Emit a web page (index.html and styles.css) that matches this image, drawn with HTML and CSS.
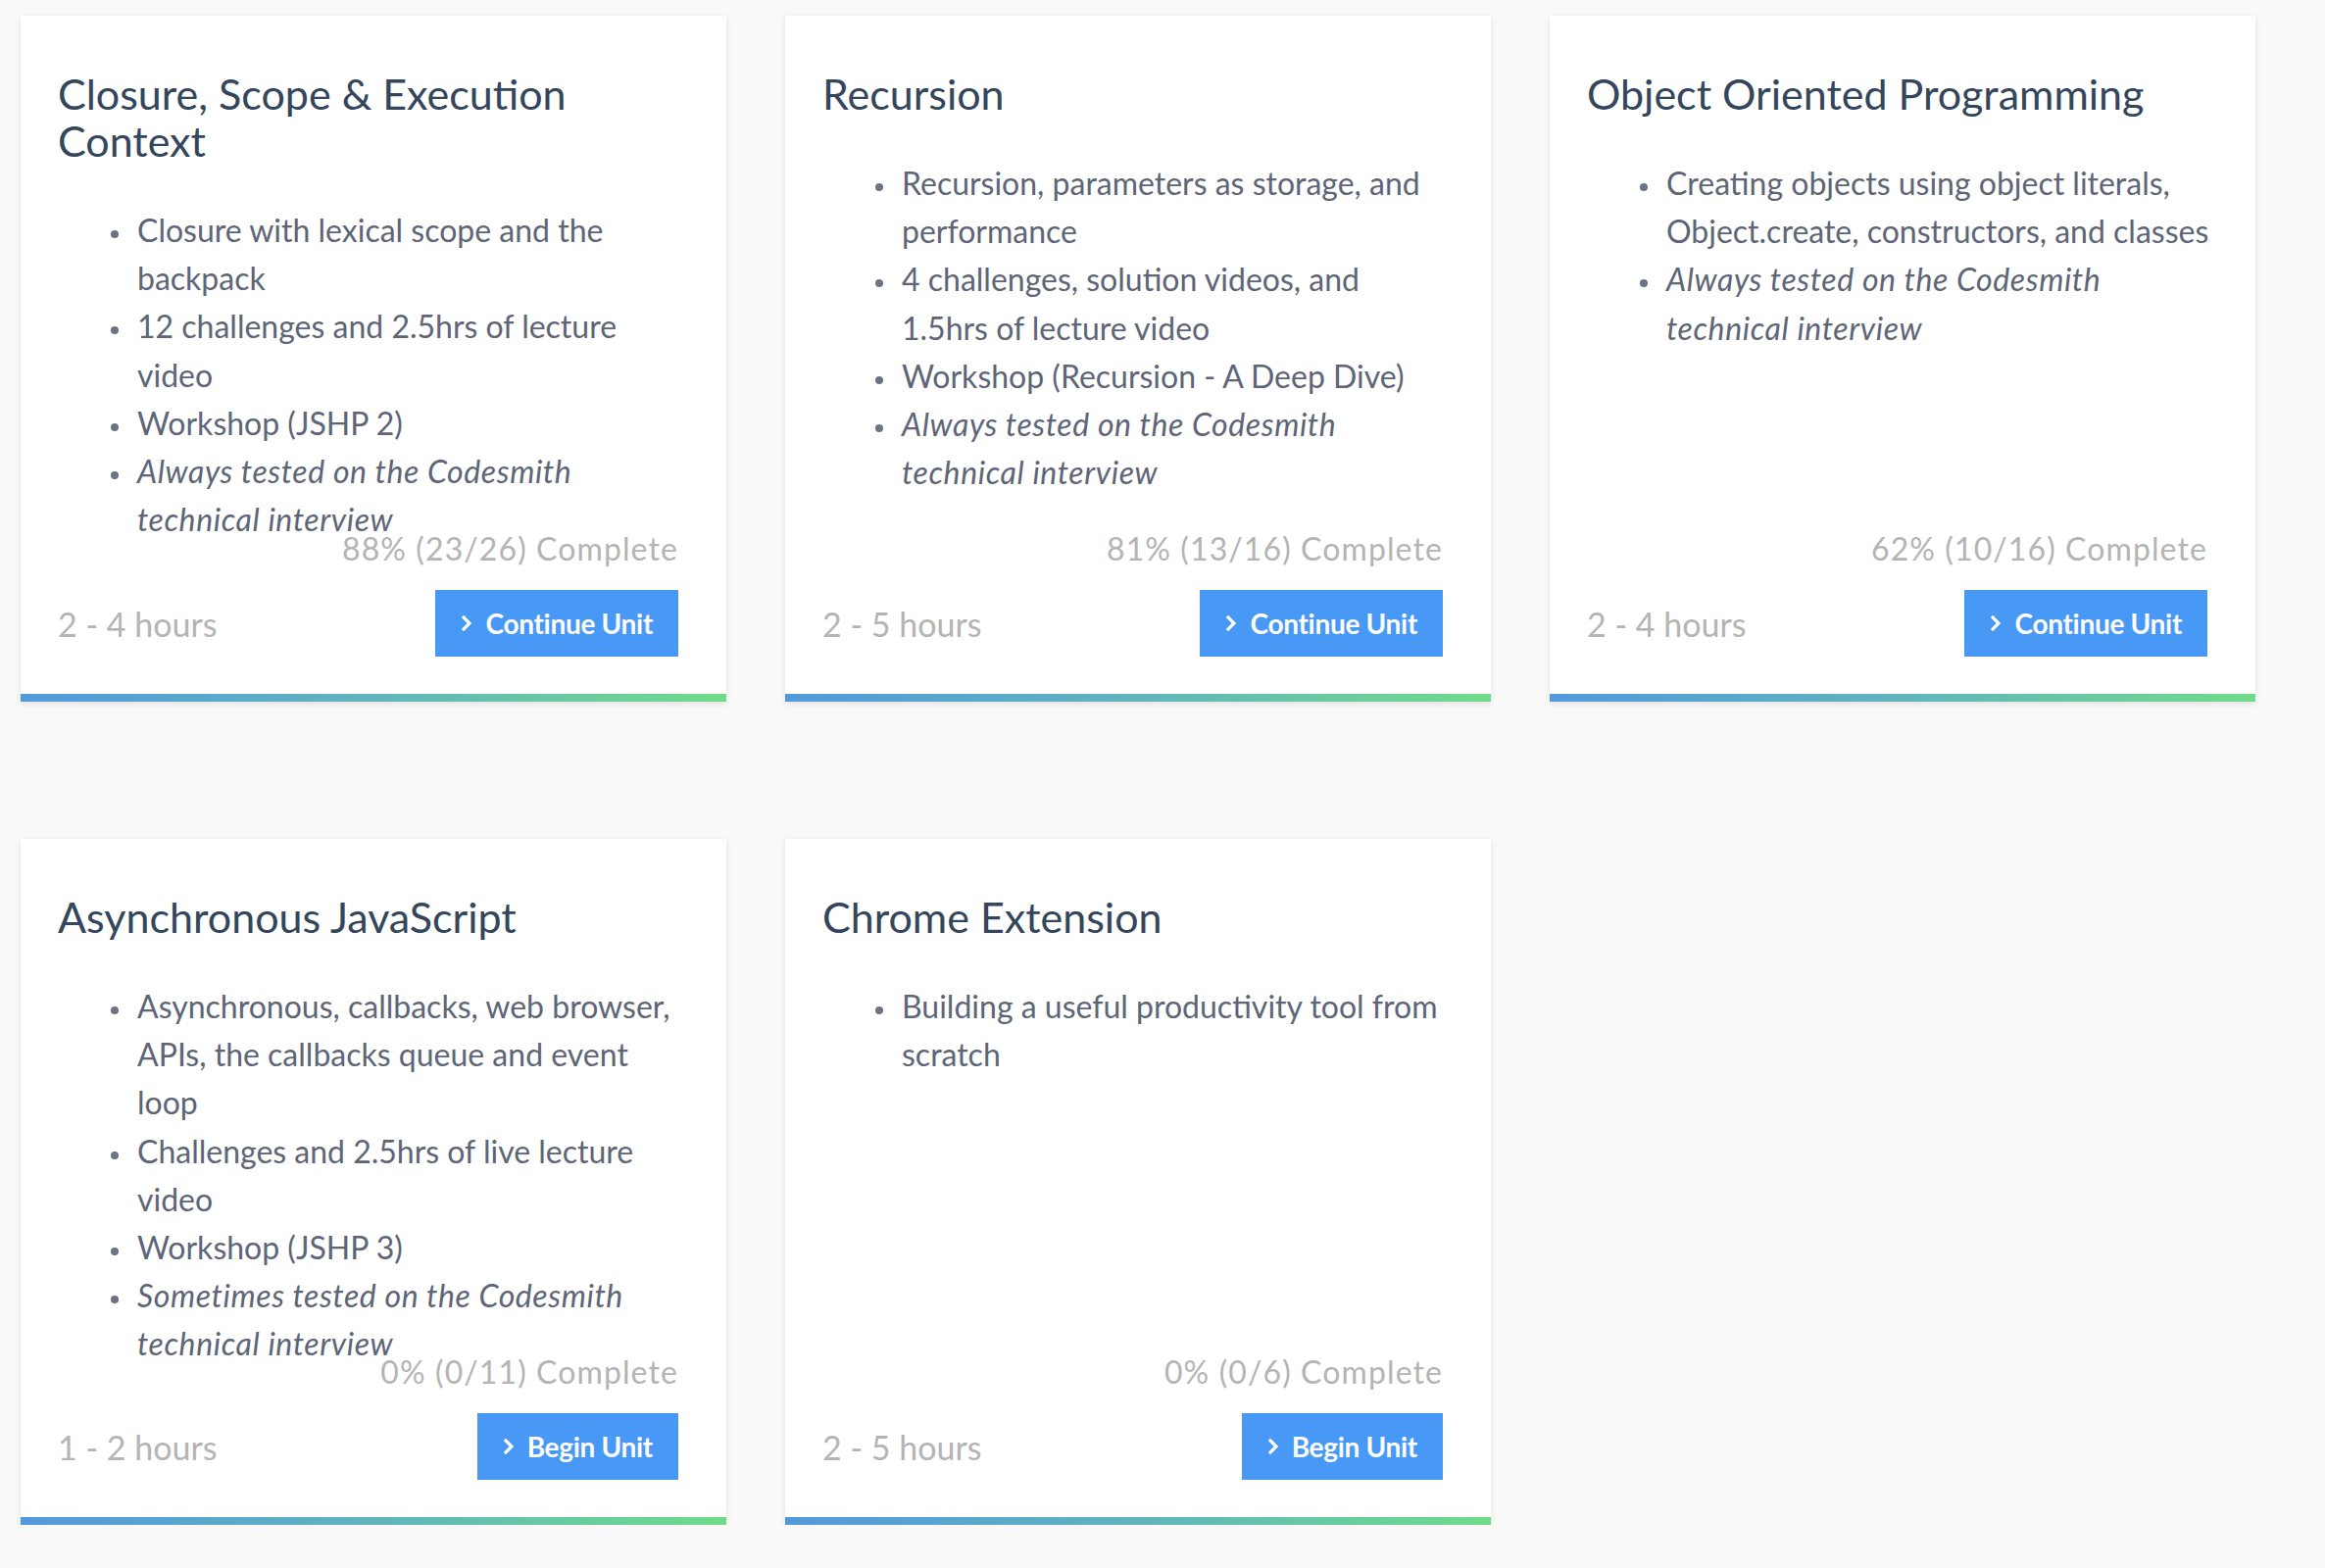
FILE: index.html
```html
<!DOCTYPE html>
<html lang="en">
<head>
<meta charset="utf-8">
<title>Units</title>
<link rel="stylesheet" href="styles.css">
</head>
<body>
<div class="grid">
  <div class="card">
    <div class="card-body">
      <div class="desc">
        <h2 class="title">Closure, Scope &amp; Execution Context</h2>
        <ul class="topics">
          <li>Closure with lexical scope and the backpack</li>
          <li>12 challenges and 2.5hrs of lecture video</li>
          <li>Workshop (JSHP 2)</li>
          <li class="em">Always tested on the Codesmith technical interview</li>
        </ul>
      </div>
      <div class="progress">88% (23/26) Complete</div>
      <div class="footer">
        <span class="hours">2 - 4 hours</span>
        <a class="btn" href="#"><svg class="chev" width="10" height="16" viewBox="0 0 10 16"><polyline points="2,2 8,8 2,14" fill="none" stroke="#fff" stroke-width="3.2" stroke-linecap="square" stroke-linejoin="miter"/></svg>Continue Unit</a>
      </div>
    </div>
    <div class="bar"></div>
  </div>

  <div class="card">
    <div class="card-body">
      <div class="desc">
        <h2 class="title">Recursion</h2>
        <ul class="topics">
          <li>Recursion, parameters as storage, and performance</li>
          <li>4 challenges, solution videos, and 1.5hrs of lecture video</li>
          <li>Workshop (Recursion - A Deep Dive)</li>
          <li class="em">Always tested on the Codesmith technical interview</li>
        </ul>
      </div>
      <div class="progress">81% (13/16) Complete</div>
      <div class="footer">
        <span class="hours">2 - 5 hours</span>
        <a class="btn" href="#"><svg class="chev" width="10" height="16" viewBox="0 0 10 16"><polyline points="2,2 8,8 2,14" fill="none" stroke="#fff" stroke-width="3.2" stroke-linecap="square" stroke-linejoin="miter"/></svg>Continue Unit</a>
      </div>
    </div>
    <div class="bar"></div>
  </div>

  <div class="card">
    <div class="card-body">
      <div class="desc">
        <h2 class="title">Object Oriented Programming</h2>
        <ul class="topics">
          <li>Creating objects using object literals, Object.create, constructors, and classes</li>
          <li class="em">Always tested on the Codesmith technical interview</li>
        </ul>
      </div>
      <div class="progress">62% (10/16) Complete</div>
      <div class="footer">
        <span class="hours">2 - 4 hours</span>
        <a class="btn" href="#"><svg class="chev" width="10" height="16" viewBox="0 0 10 16"><polyline points="2,2 8,8 2,14" fill="none" stroke="#fff" stroke-width="3.2" stroke-linecap="square" stroke-linejoin="miter"/></svg>Continue Unit</a>
      </div>
    </div>
    <div class="bar"></div>
  </div>

  <div class="card">
    <div class="card-body">
      <div class="desc">
        <h2 class="title">Asynchronous JavaScript</h2>
        <ul class="topics">
          <li>Asynchronous, callbacks, web browser, APIs, the callbacks queue and event loop</li>
          <li>Challenges and 2.5hrs of live lecture video</li>
          <li>Workshop (JSHP 3)</li>
          <li class="em">Sometimes tested on the Codesmith technical interview</li>
        </ul>
      </div>
      <div class="progress">0% (0/11) Complete</div>
      <div class="footer">
        <span class="hours">1 - 2 hours</span>
        <a class="btn" href="#"><svg class="chev" width="10" height="16" viewBox="0 0 10 16"><polyline points="2,2 8,8 2,14" fill="none" stroke="#fff" stroke-width="3.2" stroke-linecap="square" stroke-linejoin="miter"/></svg>Begin Unit</a>
      </div>
    </div>
    <div class="bar"></div>
  </div>

  <div class="card">
    <div class="card-body">
      <div class="desc">
        <h2 class="title">Chrome Extension</h2>
        <ul class="topics">
          <li>Building a useful productivity tool from scratch</li>
        </ul>
      </div>
      <div class="progress">0% (0/6) Complete</div>
      <div class="footer">
        <span class="hours">2 - 5 hours</span>
        <a class="btn" href="#"><svg class="chev" width="10" height="16" viewBox="0 0 10 16"><polyline points="2,2 8,8 2,14" fill="none" stroke="#fff" stroke-width="3.2" stroke-linecap="square" stroke-linejoin="miter"/></svg>Begin Unit</a>
      </div>
    </div>
    <div class="bar"></div>
  </div>
</div>
</body>
</html>
```

FILE: styles.css
```css
* { box-sizing: border-box; }

html, body {
  margin: 0;
  background: #f9f9f9;
}

body {
  padding: 16px 0 0 21px;
  font-family: Lato, "Open Sans", sans-serif;
  -webkit-font-smoothing: antialiased;
}

.grid {
  display: grid;
  grid-template-columns: repeat(3, 720px);
  column-gap: 60px;
  row-gap: 140px;
}

.card {
  height: 700px;
  background: #ffffff;
  display: flex;
  flex-direction: column;
  box-shadow: 0 2px 6px rgba(0, 0, 0, 0.10);
}

.card-body {
  flex: 1;
  display: flex;
  flex-direction: column;
  padding: 56px 38px 38px 38px;
}

.desc {
  height: 470px;
}

.title {
  margin: 0;
  font-size: 43px;
  line-height: 48px;
  font-weight: 400;
  color: #33465b;
}

.topics {
  margin: 42px 0 0 0;
  padding: 0 0 0 81px;
  list-style: none;
  font-size: 32px;
  line-height: 49.2px;
  color: #5d6576;
}

.topics li::before {
  content: "";
  display: inline-block;
  width: 8px;
  height: 8px;
  border-radius: 50%;
  background: #6b7384;
  vertical-align: middle;
  margin-left: -27px;
  margin-right: 19px;
}

.topics .em {
  font-style: italic;
  letter-spacing: 0.6px;
}

.progress {
  font-size: 32px;
  line-height: 36px;
  letter-spacing: 1.1px;
  text-align: right;
  color: #b4b4b4;
  padding-right: 11px;
  margin-bottom: 24px;
}

.footer {
  height: 68px;
  display: flex;
  align-items: center;
  justify-content: space-between;
  padding-right: 11px;
}

.hours {
  font-size: 34px;
  color: #b4b4b4;
}

.btn {
  height: 68px;
  display: flex;
  align-items: center;
  padding: 0 26px 0 27px;
  background: #4898f5;
  color: #ffffff;
  font-size: 28px;
  letter-spacing: -0.3px;
  font-weight: 700;
  text-decoration: none;
}

.chev {
  margin-right: 14px;
  flex: none;
}

.bar {
  height: 8px;
  background: linear-gradient(90deg, #5399dd 0%, #60b5bd 50%, #6fdc8a 100%);
}
```
